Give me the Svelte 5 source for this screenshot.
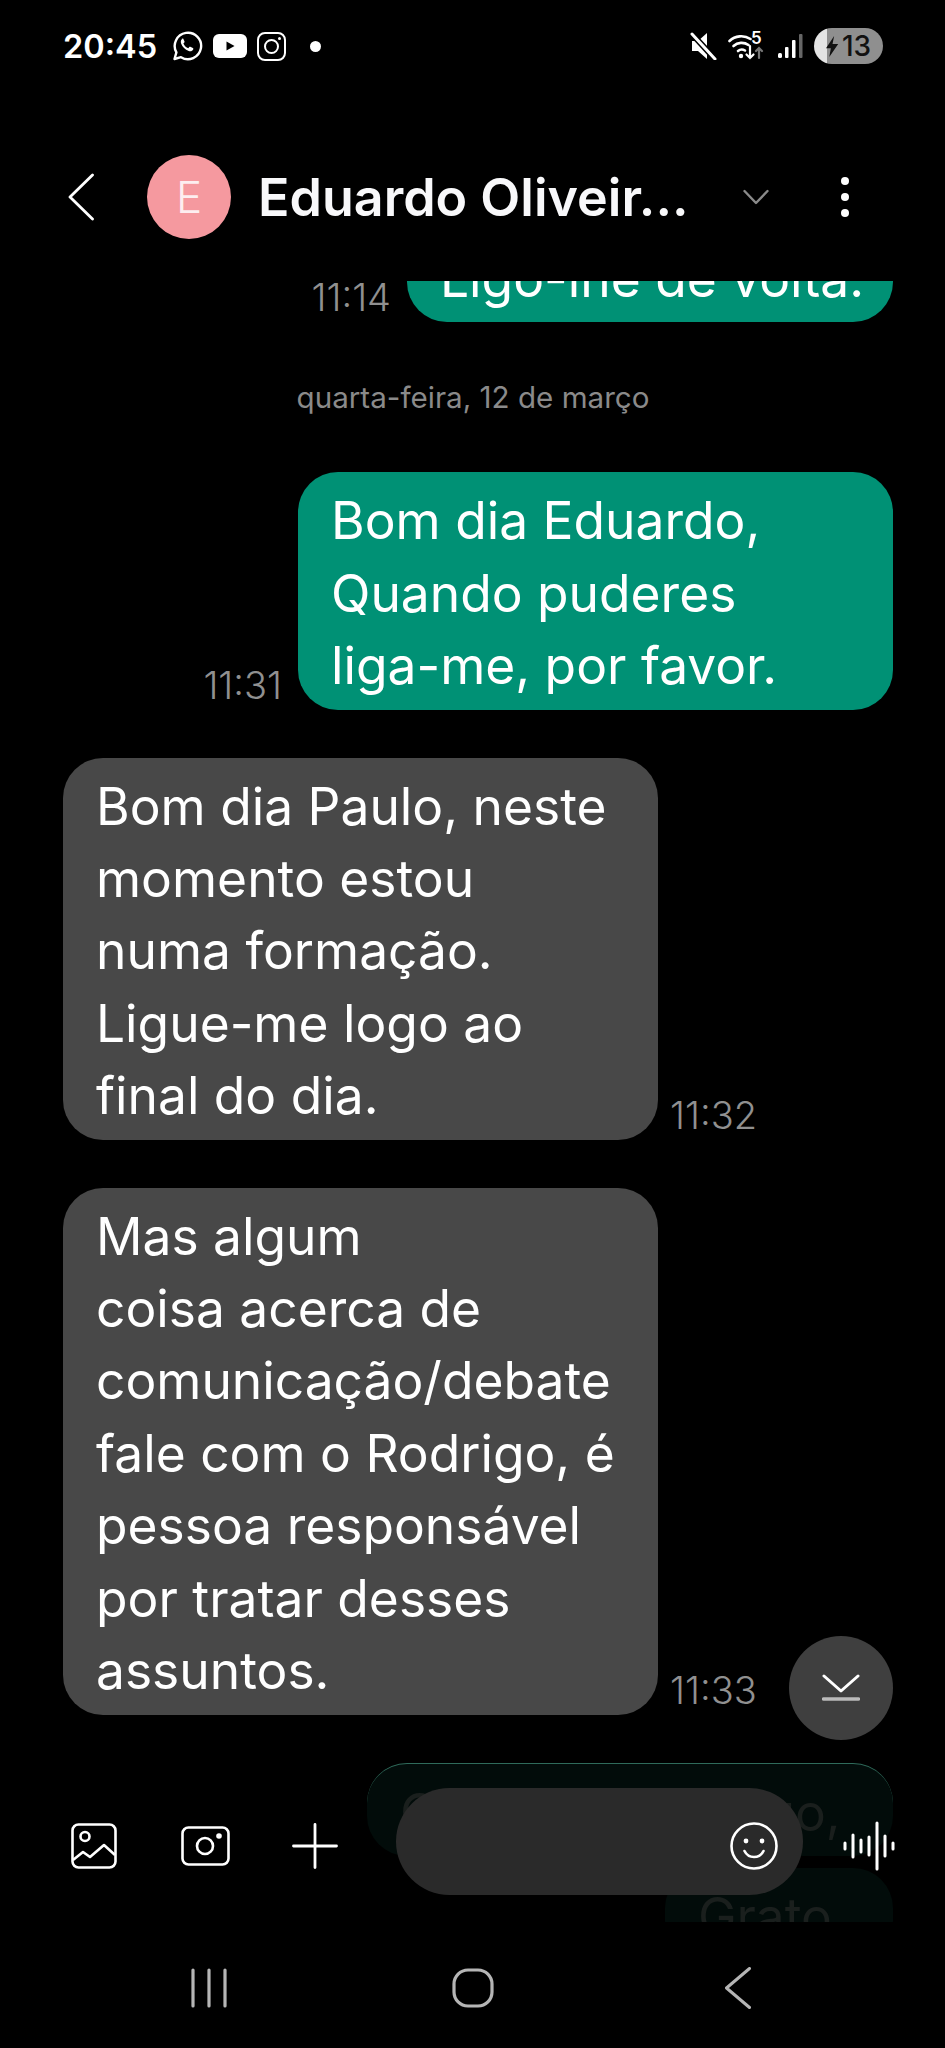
<script>
	const messages = [
		{ id: 1, mine: false, time: '11:32', lines: ['Bom dia Paulo, neste', 'momento estou', 'numa formação.', 'Ligue-me logo ao', 'final do dia.'] },
		{ id: 2, mine: false, time: '11:33', lines: ['Mas algum', 'coisa acerca de', 'comunicação/debate', 'fale com o Rodrigo, é', 'pessoa responsável', 'por tratar desses', 'assuntos.'] }
	];
	const wave = [
		[2, 22, 28], [10, 14, 36], [18, 19, 31], [26, 16, 34], [34, 2, 48], [42, 15, 35], [50, 22, 28]
	];
</script>

<div class="phone">
	<div class="status">
		<div class="status-left">
			<span class="clock">20:45</span>
			<svg class="wa" viewBox="0 0 32 32" width="32" height="32" fill="none" stroke="#fff" stroke-width="2.4">
				<path d="M3.5 29l1.9-6.600A13.200 13.200 0 1 1 10 27.200z" stroke-linejoin="round" />
				<path d="M11.600 8.800c-1.600.8-2.200 2.600-1.500 4.600 1.300 3.500 4 6.200 7.600 7.600 2 .6 3.700 0 4.500-1.600.3-.6.2-1-.3-1.300l-2.600-1.300c-.4-.2-.8-.1-1 .2l-1 1.200c-2.200-.8-4-2.600-4.900-4.800l.9-.9c.3-.3.4-.7.2-1.100l-1.100-2.400c-.2-.5-.7-.6-1.800-.2z" fill="#fff" stroke="none" />
			</svg>
			<svg class="yt" viewBox="0 0 34 24" width="34" height="24">
				<rect width="34" height="24" rx="6" fill="#fff" />
				<path d="M13.500 7.500l8 4.500-8 4.500z" fill="#000" />
			</svg>
			<svg class="ig" viewBox="0 0 29 29" width="29" height="29" fill="none" stroke="#fff" stroke-width="2">
				<rect x="1" y="1" width="27" height="27" rx="7" />
				<circle cx="14.500" cy="14.500" r="6.500" />
				<circle cx="22.500" cy="6.500" r="1.500" fill="#fff" stroke="none" />
			</svg>
			<span class="dot"></span>
		</div>
		<div class="status-right">
			<svg viewBox="0 0 28 28" width="28" height="28">
				<path d="M3 9h6l9-8v26l-9-8H3z" fill="#fff" />
				<path d="M3 2l23 25" stroke="#000" stroke-width="6" />
				<path d="M3 2l23 25" stroke="#fff" stroke-width="3" stroke-linecap="round" />
			</svg>
			<svg class="wifi" viewBox="0 0 38 30" width="38" height="30" fill="none" stroke="#fff" stroke-width="2.600" stroke-linecap="round">
				<path d="M1.500 10a17 17 0 0 1 21-2" />
				<path d="M5.500 15a12 12 0 0 1 15-1" />
				<path d="M10 20a6 6 0 0 1 7-.5" />
				<circle cx="13" cy="25" r="2.200" fill="#fff" stroke="none" />
				<path d="M22 15v12m-3.500-3.500l3.500 3.500 3.500-3.500" stroke-width="2.200" />
				<path d="M31 27V17m-3 3l3-3 3 3" stroke="#777" stroke-width="2.200" />
				<text x="23" y="13" class="five">5</text>
			</svg>
			<svg viewBox="0 0 26 26" width="26" height="26" fill="#fff">
				<rect x="1" y="20" width="4" height="5" rx="1.500" />
				<rect x="8" y="14" width="3.500" height="11" rx="1" />
				<rect x="15" y="7" width="3.500" height="18" rx="1" />
				<rect x="22" y="1" width="3.500" height="24" rx="1" fill="#666" />
			</svg>
			<div class="battery">
				<svg viewBox="0 0 16 26" width="13" height="23"><path d="M10 0L0 15h6l-2 11 11-16H8z" fill="#111" /></svg>
				<span>13</span>
			</div>
		</div>
	</div>

	<header>
		<svg class="back" viewBox="0 0 26 48" width="26" height="48" fill="none" stroke="#fff" stroke-width="2.800" stroke-linecap="round" stroke-linejoin="round">
			<path d="M24.500 2L2 24l22.500 22" />
		</svg>
		<div class="avatar">E</div>
		<h1>Eduardo Oliveir...</h1>
		<svg class="more" viewBox="0 0 26 16" width="26" height="16" fill="none" stroke="#8a8a8a" stroke-width="2.400" stroke-linecap="round" stroke-linejoin="round">
			<path d="M1.500 2L13 14 24.500 2" />
		</svg>
		<div class="dots"><i></i><i></i><i></i></div>
	</header>

	<main class="thread">
		<div class="row mine first">
			<span class="time">11:14</span>
			<div class="bubble green short">Ligo-lhe de volta.</div>
		</div>
		<div class="date">quarta-feira, 12 de março</div>
		<div class="row mine">
			<span class="time">11:31</span>
			<div class="bubble green">Bom dia Eduardo,<br />Quando puderes<br />liga-me, por favor.</div>
		</div>
		{#each messages as m (m.id)}
			<div class="row">
				<div class="bubble grey">
					{#each m.lines as line}
						{line}<br />
					{/each}
				</div>
				<span class="time">{m.time}</span>
			</div>
		{/each}
		<div class="row mine faded-row">
			<div class="bubble faded wide">Ok, vou ligar logo,</div>
		</div>
		<div class="row mine tight">
			<div class="bubble faded small">Grato</div>
		</div>

		<button class="scroll-down" aria-label="Ir para o fim">
			<svg viewBox="0 0 38 28" width="38" height="28" fill="none" stroke="#fff" stroke-width="3" stroke-linecap="round" stroke-linejoin="round">
				<path d="M2 2l17 15L36 2" />
				<path d="M1.500 25h35" stroke="#bbb" stroke-width="3.400" />
			</svg>
		</button>

		<div class="composer">
			<svg class="tool" viewBox="0 0 46 46" width="46" height="46" fill="none" stroke="#fff" stroke-width="2.600" stroke-linejoin="round">
				<rect x="1.500" y="1.500" width="43" height="43" rx="6" />
				<circle cx="14" cy="13.500" r="4.500" />
				<path d="M2 37l10-8 7 5 14-12 11 10" />
			</svg>
			<svg class="tool camera" viewBox="0 0 49 40" width="49" height="40" fill="none" stroke="#fff" stroke-width="2.600">
				<rect x="1.500" y="1.500" width="46" height="37" rx="6" />
				<circle cx="24" cy="20" r="8" />
				<circle cx="38" cy="10" r="2.800" fill="#fff" stroke="none" />
			</svg>
			<svg class="tool plus" viewBox="0 0 46 46" width="46" height="46" fill="none" stroke="#fff" stroke-width="2.800" stroke-linecap="round">
				<path d="M23 1.500v43M1.500 23h43" />
			</svg>
			<div class="pill">
				<svg viewBox="0 0 48 48" width="48" height="48" fill="none" stroke="#fff" stroke-width="2.600" stroke-linecap="round">
					<circle cx="24" cy="24" r="22.500" />
					<circle cx="16" cy="19" r="2.400" fill="#fff" stroke="none" />
					<circle cx="32" cy="19" r="2.400" fill="#fff" stroke="none" />
					<path d="M14.500 29c2 4 5.500 6 9.500 6s7.500-2 9.500-6" />
				</svg>
			</div>
			<svg class="tool wave" viewBox="0 0 52 50" width="52" height="50" stroke="#fff" stroke-width="3" stroke-linecap="round">
				{#each wave as [x, y1, y2]}
					<line x1={x} x2={x} y1={y1} y2={y2} />
				{/each}
			</svg>
		</div>
	</main>

	<nav>
		<svg viewBox="0 0 36 40" width="36" height="40" stroke="#b5b5b5" stroke-width="3.200" stroke-linecap="round">
			<path d="M2 2v36M18 2v36M34 2v36" />
		</svg>
		<svg viewBox="0 0 42 40" width="42" height="40" fill="none" stroke="#b5b5b5" stroke-width="3.200">
			<rect x="2" y="2" width="38" height="36" rx="14" />
		</svg>
		<svg viewBox="0 0 26 42" width="26" height="42" fill="none" stroke="#b5b5b5" stroke-width="3" stroke-linecap="round" stroke-linejoin="round">
			<path d="M24.500 1.500L1.500 21l23 19.500" />
		</svg>
	</nav>
</div>

<style>
	:global(body) {
		background: #000;
	}
	.phone {
		width: 945px;
		height: 2048px;
		background: #000;
		color: #fff;
		font-family: Inter, 'Liberation Sans', sans-serif;
		display: flex;
		flex-direction: column;
		overflow: hidden;
	}
	.status {
		height: 92px;
		flex: none;
		display: flex;
		justify-content: space-between;
		align-items: center;
		padding: 0 62px 0 63px;
		box-sizing: border-box;
	}
	.status-left,
	.status-right {
		display: flex;
		align-items: center;
	}
	.clock {
		font-size: 32.5px;
		font-weight: 600;
		width: 107px;
	}
	.wa {
		margin-left: 1px;
	}
	.yt {
		margin-left: 10px;
	}
	.ig {
		margin-left: 10px;
	}
	.dot {
		width: 11px;
		height: 11px;
		border-radius: 50%;
		background: #fff;
		margin-left: 24px;
	}
	.status-right {
		gap: 11px;
	}
	.five {
		font-size: 17px;
		font-weight: 600;
		fill: #fff;
		stroke: none;
	}
	.battery {
		width: 69px;
		height: 36px;
		border-radius: 18px;
		background: linear-gradient(90deg, #e4e4e4 0 13px, #8f8f8f 13px);
		display: flex;
		align-items: center;
		justify-content: center;
		gap: 3px;
		color: #111;
		font-size: 28px;
		font-weight: 500;
	}
	header {
		height: 189px;
		flex: none;
		display: flex;
		align-items: center;
		padding: 21px 0 0 68px;
		box-sizing: border-box;
	}
	.avatar {
		width: 84px;
		height: 84px;
		border-radius: 50%;
		background: #f5999f;
		color: #fdeef0;
		font-size: 44px;
		font-weight: 300;
		display: flex;
		align-items: center;
		justify-content: center;
		margin-left: 53px;
		flex: none;
	}
	h1 {
		margin: 0 0 0 27px;
		font-size: 52px;
		font-weight: 600;
		width: 485px;
		white-space: nowrap;
		color: #f8f8fa;
	}
	.dots {
		display: flex;
		flex-direction: column;
		gap: 8px;
		margin-left: 72px;
	}
	.dots i {
		display: block;
		width: 8px;
		height: 8px;
		border-radius: 50%;
		background: #fff;
	}
	.thread {
		position: relative;
		flex: 1;
		min-height: 0;
		overflow: hidden;
		padding: 0 52px 0 63px;
		display: flex;
		flex-direction: column;
		gap: 48px;
	}
	.row {
		display: flex;
		align-items: flex-end;
		gap: 12px;
		flex: none;
	}
	.row.mine {
		justify-content: flex-end;
		gap: 16px;
	}
	.first {
		margin-top: -51px;
	}
	.date {
		height: 54px;
		margin: 0 10px 0 0;
		flex: none;
		text-align: center;
		font-size: 29.6px;
		line-height: 54px;
		color: #8a8a8a;
		font-weight: 400;
	}
	.time {
		font-size: 38px;
		font-weight: 300;
		color: #909090;
		line-height: 30px;
		margin-bottom: 10px;
	}
	.bubble {
		width: 595px;
		box-sizing: border-box;
		padding: 12px 33px 8px;
		border-radius: 40px;
		font-size: 51.5px;
		line-height: 72.4px;
		white-space: nowrap;
	}
	.green {
		background: #009175;
	}
	.short {
		width: 486px;
	}
	.grey {
		background: #484848;
	}
	.faded {
		background: #020c0a;
		color: #1a1f1d;
	}
	.wide {
		width: 526px;
		border-top: 1px solid #2f6b5b;
	}
	.small {
		width: 228px;
	}
	.tight {
		margin-top: -36px;
	}
	.scroll-down {
		position: absolute;
		top: 1355px;
		right: 52px;
		width: 104px;
		height: 104px;
		border: 0;
		padding: 0;
		border-radius: 50%;
		background: #3f3f3f;
		display: flex;
		align-items: center;
		justify-content: center;
	}
	.composer {
		position: absolute;
		left: 71px;
		bottom: 27px;
		display: flex;
		align-items: flex-end;
	}
	.tool {
		margin-bottom: 26px;
		flex: none;
	}
	.camera {
		margin: 0 0 29px 64px;
	}
	.plus {
		margin-left: 62px;
	}
	.pill {
		width: 407px;
		height: 107px;
		margin-left: 58px;
		border-radius: 54px;
		background: #2a2a2a;
		box-sizing: border-box;
		padding: 0 25px 25px 0;
		display: flex;
		justify-content: flex-end;
		align-items: flex-end;
	}
	.wave {
		margin: 0 0 24px 40px;
	}
	nav {
		height: 126px;
		flex: none;
		display: grid;
		grid-template-columns: repeat(3, 1fr);
		justify-items: center;
		align-items: center;
		padding: 6px 75px 0 77px;
		box-sizing: border-box;
	}
</style>
